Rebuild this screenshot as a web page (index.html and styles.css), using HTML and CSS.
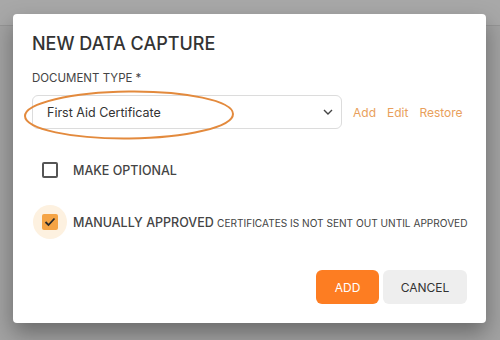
FILE: index.html
```html
<!DOCTYPE html>
<html lang="en">
<head>
  <meta charset="UTF-8" />
  <title>New Data Capture</title>
  <link rel="stylesheet" href="styles.css">
</head>
<body>

  <!-- dimmed page behind the dialog -->
  <div class="backdrop-bar"></div>

  <!-- DIALOG -->
  <div class="modal">
    <h1 class="modal-title">NEW DATA CAPTURE</h1>

    <div class="field-label">DOCUMENT TYPE *</div>
    <div class="select-row">
      <div class="select-box">
        <span class="select-value">First Aid Certificate</span>
        <svg class="chevron" width="10" height="6" viewBox="0 0 10 6">
          <path d="M1 1l4 4 4-4" fill="none" stroke="#444" stroke-width="1.4" />
        </svg>
        <!-- hand-drawn highlight ring -->
        <svg class="ring" width="216" height="52" viewBox="0 0 216 52">
          <ellipse cx="107" cy="26" rx="104" ry="23.5" fill="none" stroke="#e38a3d" stroke-width="2" transform="rotate(-0.6 107 26)" />
        </svg>
      </div>
      <a class="link">Add</a>
      <a class="link">Edit</a>
      <a class="link">Restore</a>
    </div>

    <label class="check-row">
      <span class="check"></span>
      <span class="check-label">MAKE OPTIONAL</span>
    </label>

    <label class="check-row">
      <span class="check-halo">
        <span class="check is-checked">
          <svg width="12" height="10" viewBox="0 0 12 10">
            <path d="M1.5 5l3 3 6-6.5" fill="none" stroke="#2a2a2a" stroke-width="1.8" />
          </svg>
        </span>
      </span>
      <span class="check-label">MANUALLY APPROVED <small class="check-hint">CERTIFICATES IS NOT SENT OUT UNTIL APPROVED</small></span>
    </label>

    <div class="actions">
      <button class="btn btn-primary">ADD</button>
      <button class="btn btn-plain">CANCEL</button>
    </div>
  </div>

</body>
</html>
```

FILE: styles.css
```css
* { margin: 0; padding: 0; box-sizing: border-box; }
body {
  background-color: #a2a2a2;
  font-family: "Inter", "Noto Sans", sans-serif;
  height: 340px;
  overflow: hidden;
  position: relative;
}
.backdrop-bar {
  height: 26px;
  background-color: #a8a8a8;
  border-bottom: 1px solid #959595;
}
.modal {
  position: absolute;
  top: 14px;
  left: 13px;
  width: 473px;
  height: 309px;
  background: #fff;
  border-radius: 4px;
  box-shadow: 0 10px 22px rgba(0, 0, 0, 0.35);
  padding: 16px 19px 19px 19px;
  display: flex;
  flex-direction: column;
}
.modal-title {
  font-size: 18px;
  font-weight: 500;
  line-height: 28px;
  color: #333;
}
.field-label {
  margin-top: 12px;
  font-size: 11.5px;
  line-height: 16px;
  color: #444;
}
.select-row {
  margin-top: 9px;
  display: flex;
  align-items: center;
}
.select-box {
  position: relative;
  width: 310px;
  height: 34px;
  border: 1px solid #dcdcdc;
  border-radius: 6px;
  display: flex;
  align-items: center;
  justify-content: space-between;
  padding: 0 8px 0 14px;
}
.select-value {
  font-size: 12.5px;
  color: #333;
}
.ring {
  position: absolute;
  left: -11px;
  top: -7px;
}
.link {
  margin-left: 11px;
  font-size: 12px;
  color: #e99f5c;
  cursor: pointer;
}

.check-row {
  display: flex;
  align-items: center;
  height: 36px;
  margin-top: 23px;
  padding-left: 10px;
}
.check-row + .check-row { margin-top: 16px; }
.check {
  width: 16px;
  height: 16px;
  border: 2px solid #555;
  border-radius: 2px;
  display: flex;
  align-items: center;
  justify-content: center;
  flex-shrink: 0;
}
.check.is-checked {
  border: none;
  background-color: #f5a445;
}
.check-halo {
  width: 34px;
  height: 34px;
  margin: 0 -9px;
  border-radius: 50%;
  background-color: #fdf1e0;
  display: flex;
  align-items: center;
  justify-content: center;
  flex-shrink: 0;
}
.check-label {
  margin-left: 15px;
  font-size: 12.5px;
  font-weight: 500;
  color: #444;
  white-space: nowrap;
}
.check-hint {
  font-size: 10.1px;
  font-weight: 400;
}

.actions {
  margin-top: auto;
  display: flex;
  justify-content: flex-end;
  gap: 4px;
}
.btn {
  border: none;
  border-radius: 6px;
  height: 34px;
  font-family: inherit;
  font-size: 12px;
  cursor: pointer;
}
.btn-primary {
  width: 63px;
  background-color: #fd7d22;
  color: #fff;
}
.btn-plain {
  width: 84px;
  background-color: #eeeeee;
  color: #333;
}
```
